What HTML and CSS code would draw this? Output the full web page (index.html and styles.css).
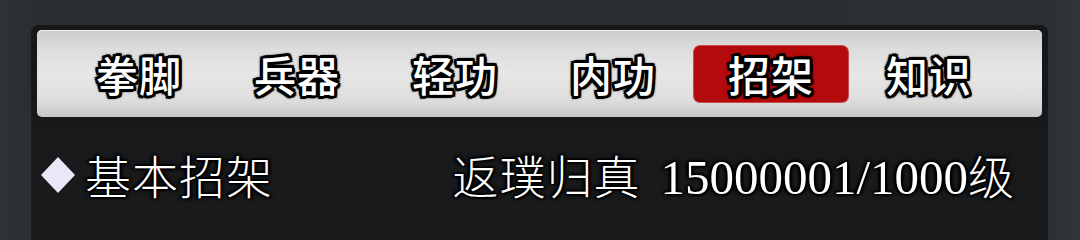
FILE: index.html
```html
<!DOCTYPE html>
<html lang="zh">
<head>
<meta charset="utf-8">
<link rel="stylesheet" href="styles.css">
</head>
<body>
<div class="panel">
  <div class="tabs">
    <div class="tab">拳脚</div>
    <div class="tab">兵器</div>
    <div class="tab">轻功</div>
    <div class="tab">内功</div>
    <div class="tab active">招架</div>
    <div class="tab">知识</div>
  </div>
  <div class="row">
    <svg class="bullet" width="36" height="38" viewBox="0 0 36 38"><polygon points="18,1 35,19 18,37 1,19" fill="#e9e8f6"/></svg>
    <span class="name">基本招架</span>
    <span class="level"><span class="rank">返璞归真</span><span class="num">15000001/1000</span><span class="unit">级</span></span>
  </div>
</div>
</body>
</html>
```
FILE: styles.css
```css
html, body {
  margin: 0;
  padding: 0;
}
body {
  width: 1080px;
  height: 100vh;
  min-height: 222px;
  overflow: hidden;
  display: flex;
  flex-direction: column;
  background: linear-gradient(90deg, #2f3338 0%, #2b2f34 3%, #2a2e33 50%, #2c3035 97%, #30353a 100%);
  font-family: "Noto Sans CJK SC", "Noto Sans", sans-serif;
}
.panel {
  margin: 25px 0 0 31px;
  width: 1017px;
  flex: 1;
  box-sizing: border-box;
  padding: 5px 6px 0 6px;
  background: linear-gradient(180deg, #161719 0%, #1a1b1d 100%);
  border-radius: 7px 7px 0 0;
}
.tabs {
  height: 87px;
  box-sizing: border-box;
  padding-left: 25px;
  display: grid;
  grid-template-columns: repeat(6, 154px);
  column-gap: 4px;
  align-items: center;
  border-radius: 5px;
  background: linear-gradient(180deg, #cbcbcb 0%, #dcdcdc 20%, #e7e7e7 50%, #dedede 80%, #c8c8c8 100%);
  box-shadow: inset 0 1px 0 #f0f0f0;
}
.tab {
  height: 56px;
  display: flex;
  align-items: center;
  justify-content: center;
  font-size: 42px;
  font-weight: 500;
  color: #fff;
  letter-spacing: 1px;
  text-shadow:
    2px 0 0 #000, -2px 0 0 #000, 0 2px 0 #000, 0 -2px 0 #000,
    2px 2px 0 #000, -2px -2px 0 #000, 2px -2px 0 #000, -2px 2px 0 #000,
    3px 0 0 #000, -3px 0 0 #000, 0 3px 0 #000, 0 -3px 0 #000,
    3px 2px 1px #000, -3px -2px 1px #000, 2px -3px 1px #000, -2px 3px 1px #000,
    0 0 5px #000;
}
.tab.active {
  background: #b30b0b;
  border-radius: 6px;
  box-shadow: 0 0 0 1px #c94a4a;
}
.row {
  display: flex;
  align-items: center;
  height: 100px;
  padding: 14px 28px 0 3px;
  box-sizing: border-box;
  color: #fff;
  text-shadow: 0 0 3px #000, 0 0 5px #000, 1px 1px 2px #000, -1px -1px 2px #000, 2px 0 3px #000, -2px 0 3px #000;
}
.bullet {
  flex: none;
  margin-top: 2px;
}
.name {
  margin-left: 9px;
  font-size: 46px;
  font-weight: 300;
  letter-spacing: 1px;
}
.level {
  margin-left: auto;
  display: flex;
  align-items: baseline;
}
.rank {
  font-size: 46px;
  font-weight: 300;
  letter-spacing: 1px;
  margin-right: 20px;
}
.num {
  font-family: "Liberation Serif", "DejaVu Serif", serif;
  font-size: 49px;
}
.unit {
  font-size: 46px;
  font-weight: 300;
}
```
